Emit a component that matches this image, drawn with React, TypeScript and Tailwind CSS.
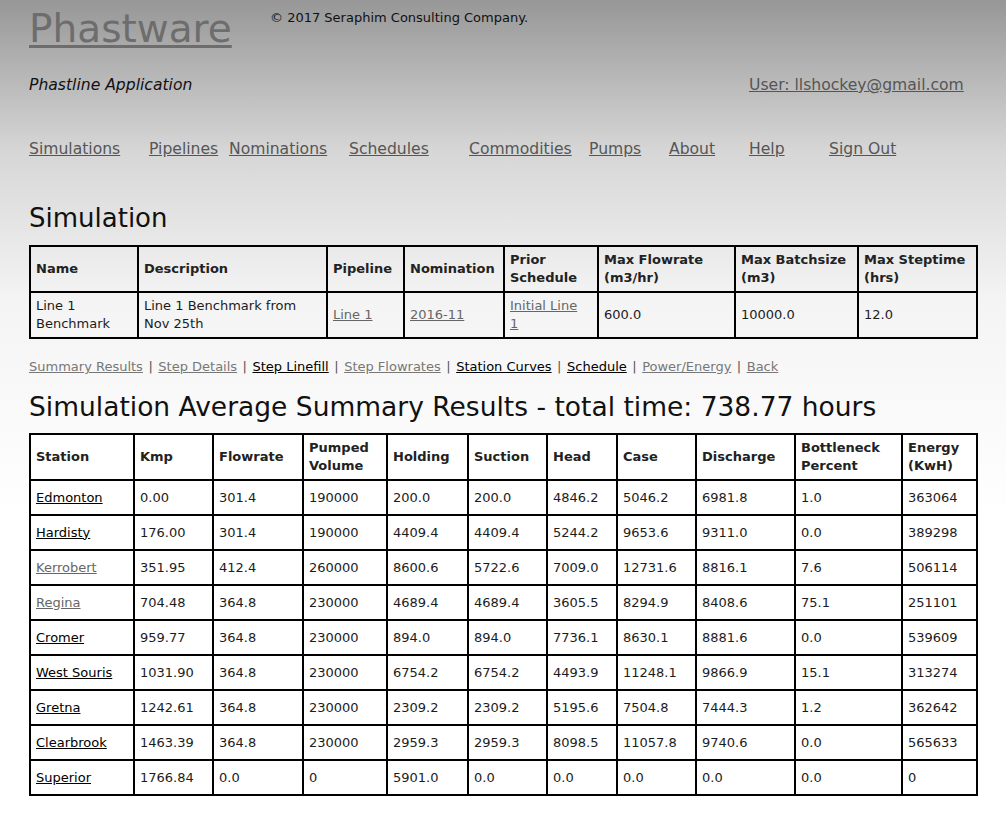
import React from 'react';

const font = "font-['DejaVu_Sans',Verdana,sans-serif]";

const navLinks = [
  { label: 'Simulations', w: 'w-[120px]' },
  { label: 'Pipelines', w: 'w-[80px]' },
  { label: 'Nominations', w: 'w-[120px]' },
  { label: 'Schedules', w: 'w-[120px]' },
  { label: 'Commodities', w: 'w-[120px]' },
  { label: 'Pumps', w: 'w-[80px]' },
  { label: 'About', w: 'w-[80px]' },
  { label: 'Help', w: 'w-[80px]' },
  { label: 'Sign Out', w: 'w-[80px]' },
];

const subLinks = [
  { label: 'Summary Results', visited: true },
  { label: 'Step Details', visited: true },
  { label: 'Step Linefill', visited: false },
  { label: 'Step Flowrates', visited: true },
  { label: 'Station Curves', visited: false },
  { label: 'Schedule', visited: false },
  { label: 'Power/Energy', visited: true },
  { label: 'Back', visited: true },
];

const simCols = [108, 189, 77, 100, 94, 137, 123, 119];

const summaryCols = [104, 79, 90, 84, 81, 79, 70, 79, 99, 107, 75];
const summaryHead = ['Station', 'Kmp', 'Flowrate', 'Pumped Volume', 'Holding', 'Suction', 'Head', 'Case', 'Discharge', 'Bottleneck Percent', 'Energy (KwH)'];

const rows: { name: string; visited: boolean; vals: string[] }[] = [
  { name: 'Edmonton', visited: false, vals: ['0.00', '301.4', '190000', '200.0', '200.0', '4846.2', '5046.2', '6981.8', '1.0', '363064'] },
  { name: 'Hardisty', visited: false, vals: ['176.00', '301.4', '190000', '4409.4', '4409.4', '5244.2', '9653.6', '9311.0', '0.0', '389298'] },
  { name: 'Kerrobert', visited: true, vals: ['351.95', '412.4', '260000', '8600.6', '5722.6', '7009.0', '12731.6', '8816.1', '7.6', '506114'] },
  { name: 'Regina', visited: true, vals: ['704.48', '364.8', '230000', '4689.4', '4689.4', '3605.5', '8294.9', '8408.6', '75.1', '251101'] },
  { name: 'Cromer', visited: false, vals: ['959.77', '364.8', '230000', '894.0', '894.0', '7736.1', '8630.1', '8881.6', '0.0', '539609'] },
  { name: 'West Souris', visited: false, vals: ['1031.90', '364.8', '230000', '6754.2', '6754.2', '4493.9', '11248.1', '9866.9', '15.1', '313274'] },
  { name: 'Gretna', visited: false, vals: ['1242.61', '364.8', '230000', '2309.2', '2309.2', '5195.6', '7504.8', '7444.3', '1.2', '362642'] },
  { name: 'Clearbrook', visited: false, vals: ['1463.39', '364.8', '230000', '2959.3', '2959.3', '8098.5', '11057.8', '9740.6', '0.0', '565633'] },
  { name: 'Superior', visited: false, vals: ['1766.84', '0.0', '0', '5901.0', '0.0', '0.0', '0.0', '0.0', '0.0', '0'] },
];

const cell = 'border-2 border-black px-[5px] py-0 text-left align-middle leading-[18px]';

export default function App() {
  return (
    <div className={`${font} min-h-[821px] bg-[linear-gradient(to_bottom,#979797_0px,#d6d6d6_150px,#f4f4f4_300px,#ffffff_520px)] px-[29px] text-[13px] text-[#1c1c1c]`}>
      {/* header */}
      <div className="flex items-start">
        <a href="#" className="w-[241px] pt-[7px] text-[39px] leading-[44px] text-[#6d6d6d] underline decoration-[3px] underline-offset-[3px]">
          Phastware
        </a>
        <span className="pt-[8px] text-[13px] text-[#111]">© 2017 Seraphim Consulting Company.</span>
      </div>

      <div className="mt-[24px] flex items-center text-[15.6px] leading-[20px]">
        <span className="w-[720px] italic text-[#111]">Phastline Application</span>
        <a href="#" className="text-[#555] underline">User: llshockey@gmail.com</a>
      </div>

      <nav className="mt-[44px] flex text-[15.6px] leading-[20px]">
        {navLinks.map((l) => (
          <div key={l.label} className={l.w}>
            <a href="#" className="text-[#555] underline">{l.label}</a>
          </div>
        ))}
      </nav>

      <h1 className="mt-[43px] text-[26px] leading-[32px] font-normal text-[#111]">Simulation</h1>

      <table className="mt-[11px] w-[949px] table-fixed border-collapse border-2 border-black">
        <colgroup>
          {simCols.map((w, i) => <col key={i} style={{ width: w }} />)}
        </colgroup>
        <thead>
          <tr className="h-[46px]">
            {['Name', 'Description', 'Pipeline', 'Nomination', 'Prior Schedule', 'Max Flowrate (m3/hr)', 'Max Batchsize (m3)', 'Max Steptime (hrs)'].map((h) => (
              <th key={h} className={`${cell} font-bold text-[#222]`}>{h}</th>
            ))}
          </tr>
        </thead>
        <tbody>
          <tr className="h-[46px]">
            <td className={cell}>Line 1 Benchmark</td>
            <td className={cell}>Line 1 Benchmark from Nov 25th</td>
            <td className={cell}><a href="#" className="text-[#666] underline">Line 1</a></td>
            <td className={cell}><a href="#" className="text-[#666] underline">2016-11</a></td>
            <td className={cell}><a href="#" className="text-[#666] underline">Initial Line<br />1</a></td>
            <td className={cell}>600.0</td>
            <td className={cell}>10000.0</td>
            <td className={cell}>12.0</td>
          </tr>
        </tbody>
      </table>

      <div className="mt-[19px] flex flex-wrap leading-[18px]">
        {subLinks.map((l, i) => (
          <React.Fragment key={l.label}>
            {i > 0 && <span className="px-[5.5px] text-[#555]">|</span>}
            <a href="#" className={`underline ${l.visited ? 'text-[#777]' : 'text-black'}`}>{l.label}</a>
          </React.Fragment>
        ))}
      </div>

      <h2 className="mt-[15px] text-[26.5px] leading-[32px] font-normal text-[#111]">
        Simulation Average Summary Results - total time: 738.77 hours
      </h2>

      <table className="mt-[10px] w-[949px] table-fixed border-collapse border-2 border-black bg-white">
        <colgroup>
          {summaryCols.map((w, i) => <col key={i} style={{ width: w }} />)}
        </colgroup>
        <thead>
          <tr className="h-[46px]">
            {summaryHead.map((h) => (
              <th key={h} className={`${cell} font-bold text-[#222]`}>{h}</th>
            ))}
          </tr>
        </thead>
        <tbody>
          {rows.map((r) => (
            <tr key={r.name} className="h-[35px]">
              <td className={cell}>
                <a href="#" className={`underline ${r.visited ? 'text-[#666]' : 'text-black'}`}>{r.name}</a>
              </td>
              {r.vals.map((v, i) => (
                <td key={i} className={cell}>{v}</td>
              ))}
            </tr>
          ))}
        </tbody>
      </table>
      <div className="h-[24px]" />
    </div>
  );
}
